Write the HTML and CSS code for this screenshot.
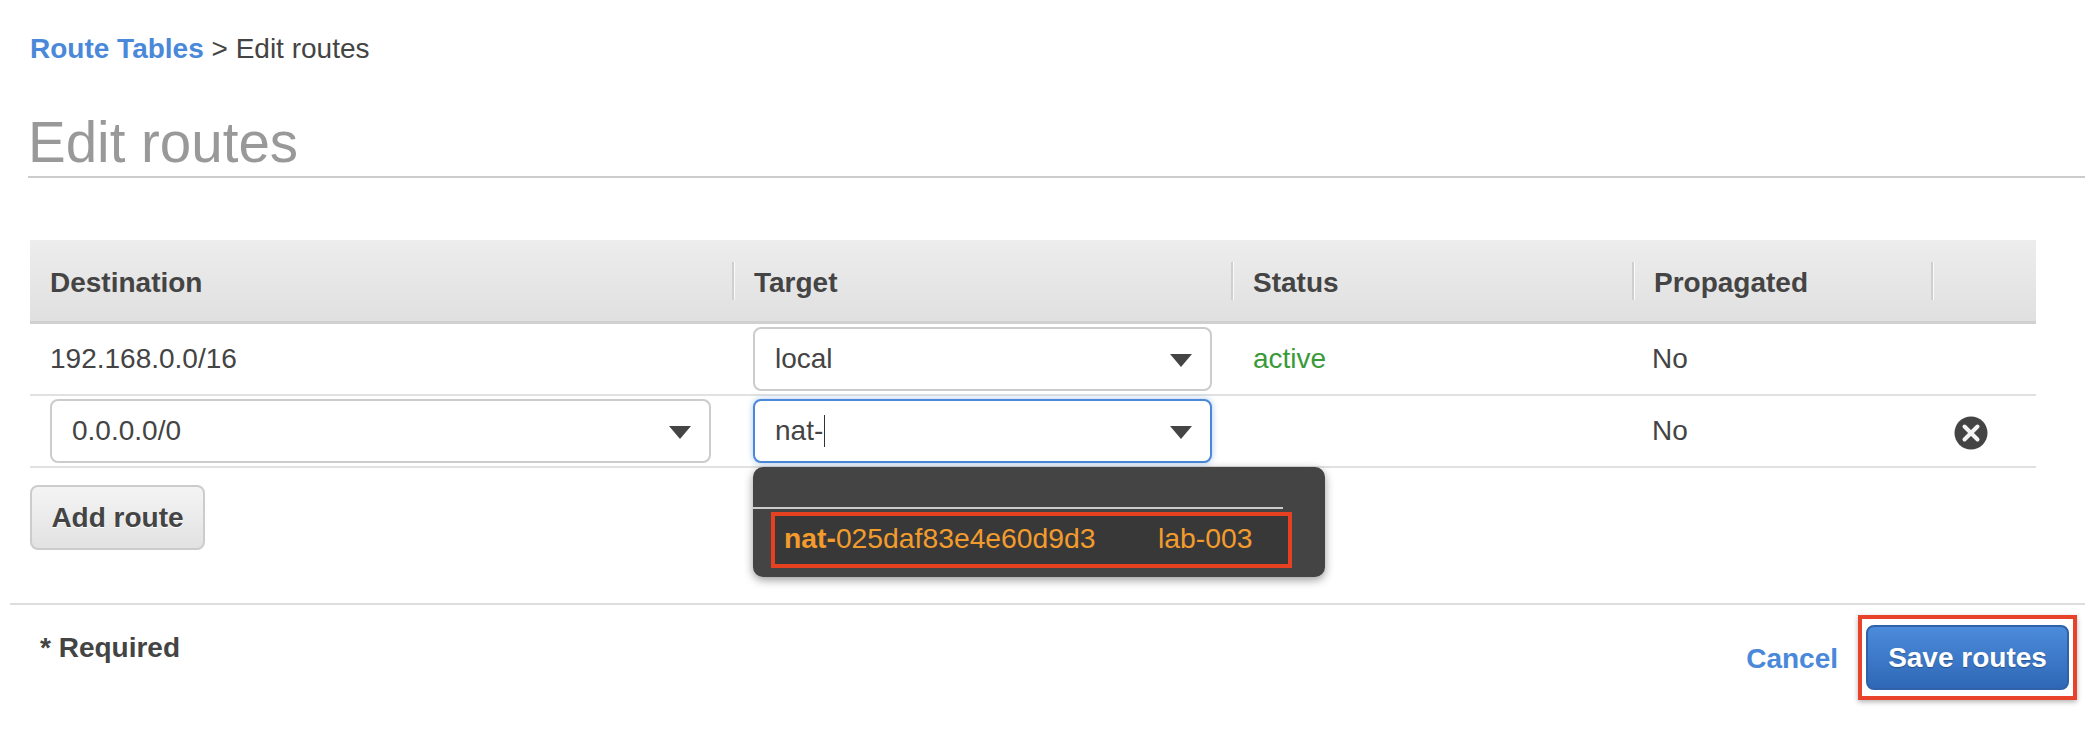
FILE: index.html
```html
<!DOCTYPE html>
<html lang="en">
<head>
<meta charset="utf-8">
<title>Edit routes</title>
<link rel="stylesheet" href="styles.css">
</head>
<body>
<div class="page">
  <nav class="crumbs"><a class="crumb-link">Route Tables</a> &gt; Edit routes</nav>
  <h1 class="title">Edit routes</h1>
  <section class="routes">
    <div class="row head">
      <div class="cell th">Destination</div>
      <div class="cell th sep">Target</div>
      <div class="cell th sep">Status</div>
      <div class="cell th sep">Propagated</div>
      <div class="cell th sep"></div>
    </div>
    <div class="row">
      <div class="cell">192.168.0.0/16</div>
      <div class="cell">
        <div class="select"><span>local</span><i class="caret"></i></div>
      </div>
      <div class="cell status">active</div>
      <div class="cell">No</div>
      <div class="cell"></div>
    </div>
    <div class="row">
      <div class="cell">
        <div class="select"><span>0.0.0.0/0</span><i class="caret"></i></div>
      </div>
      <div class="cell target-cell">
        <div class="select focus"><span class="typed">nat-</span><i class="caret"></i></div>
        <div class="menu">
          <div class="menu-top"></div>
          <div class="option">
            <span class="opt-id"><b>nat-</b>025daf83e4e60d9d3</span>
            <span class="opt-name">lab-003</span>
          </div>
        </div>
      </div>
      <div class="cell"></div>
      <div class="cell">No</div>
      <div class="cell">
        <svg class="remove" viewBox="0 0 34 34" aria-label="Remove">
          <circle cx="17" cy="17" r="16.5" fill="#444"/>
          <path d="M10.5 10.5 L23.5 23.5 M23.5 10.5 L10.5 23.5" stroke="#f4f4f4" stroke-width="4" stroke-linecap="round"/>
        </svg>
      </div>
    </div>
    <button class="btn add">Add route</button>
  </section>
  <footer class="foot">
    <div class="req">* Required</div>
    <div class="actions">
      <a class="cancel">Cancel</a>
      <div class="save-mark"><button class="btn save">Save routes</button></div>
    </div>
  </footer>
</div>
</body>
</html>
```
FILE: styles.css
```css
* { box-sizing: border-box; }
html, body { margin: 0; padding: 0; background: #fff; }
body { font-family: "Liberation Sans", Arial, sans-serif; font-size: 28px; color: #444; overflow: hidden; }
.page { width: 2092px; height: 756px; padding: 32px 7px 0 10px; }
.crumbs { margin-left: 20px; height: 32px; line-height: 34px; font-size: 28px; }
.crumb-link { color: #4a88d9; font-weight: 700; }
.title { margin: 49px 0 0 18px; height: 65px; line-height: 60px; border-bottom: 2px solid #ccc; font-size: 56.5px; font-weight: 400; color: #999; }
.routes { margin: 62px 0 0 20px; width: 2006px; }
.row { display: grid; grid-template-columns: 702px 499px 401px 299px 105px; height: 72px; border-bottom: 2px solid #e1e1e1; align-items: center; }
.head { height: 84px; border-bottom: 3px solid #d0d0d0; background: linear-gradient(#ededed, #e0e0e0); }
.cell { position: relative; padding-left: 20px; white-space: nowrap; }
.th { font-weight: 700; height: 38px; line-height: 42px; }
.sep { border-left: 2px solid #cfcfcf; box-shadow: inset 1px 0 0 #fafafa; padding-left: 20px; }
.status { padding-left: 22px; color: #3a9a3a; }
.select { width: 100%; max-width: 661px; height: 64px; padding: 0 18px 0 20px; display: flex; align-items: center; justify-content: space-between; background: #fff; border: 2px solid #ccc; border-radius: 8px; }
.row .cell:nth-child(2) .select { width: 459px; margin-left: 1px; }
.focus { border-color: #4a88d9; box-shadow: 0 0 6px rgba(74, 136, 217, .45); }
.typed { border-right: 1.5px solid #333; line-height: 32px; padding-right: 1px; }
.caret { width: 0; height: 0; border-left: 11.5px solid transparent; border-right: 11.5px solid transparent; border-top: 13px solid #444; margin-top: 2px; }
.menu { position: absolute; left: 21px; top: 68px; width: 572px; height: 110px; background: #444; border-radius: 10px; box-shadow: 0 3px 10px rgba(0, 0, 0, .4); z-index: 2; color: #f39c2d; font-size: 28.3px; }
.menu-top { height: 42px; width: 530px; border-bottom: 2px solid #ccc; }
.option { margin: 3px 0 0 18px; width: 521px; height: 56px; border: 4px solid #e5401f; background: #383838; display: flex; align-items: center; padding: 0 0 4px 9px; }
.opt-id { width: 374px; }
.option b { font-weight: 700; }
.remove { width: 34px; height: 34px; display: block; margin: 3px 0 0 3px; }
.btn { display: block; font-family: inherit; font-size: 28px; font-weight: 700; border-radius: 8px; padding: 0; }
.add { margin-top: 17px; width: 175px; height: 65px; color: #444; background: linear-gradient(#f4f4f4, #e2e2e2); border: 2px solid #ccc; text-shadow: 0 1px 0 #fff; }
.foot { margin-top: 53px; border-top: 2px solid #ddd; display: flex; justify-content: space-between; }
.req { margin: 26px 0 0 30px; line-height: 34px; font-weight: 700; }
.actions { display: flex; align-items: center; margin: 10px 8px 0 0; }
.cancel { color: #4a88d9; font-weight: 700; margin-right: 20px; padding-top: 2px; }
.save-mark { padding: 6px 4px; border: 4px solid #e8432a; box-shadow: 0 2px 5px rgba(0, 0, 0, .3); }
.save { width: 203px; height: 65px; color: #fff; background: linear-gradient(#4c8bdb, #2e68b6); border: 2px solid #2f62a8; text-shadow: 0 1px 1px rgba(0, 0, 0, .3); }
```
